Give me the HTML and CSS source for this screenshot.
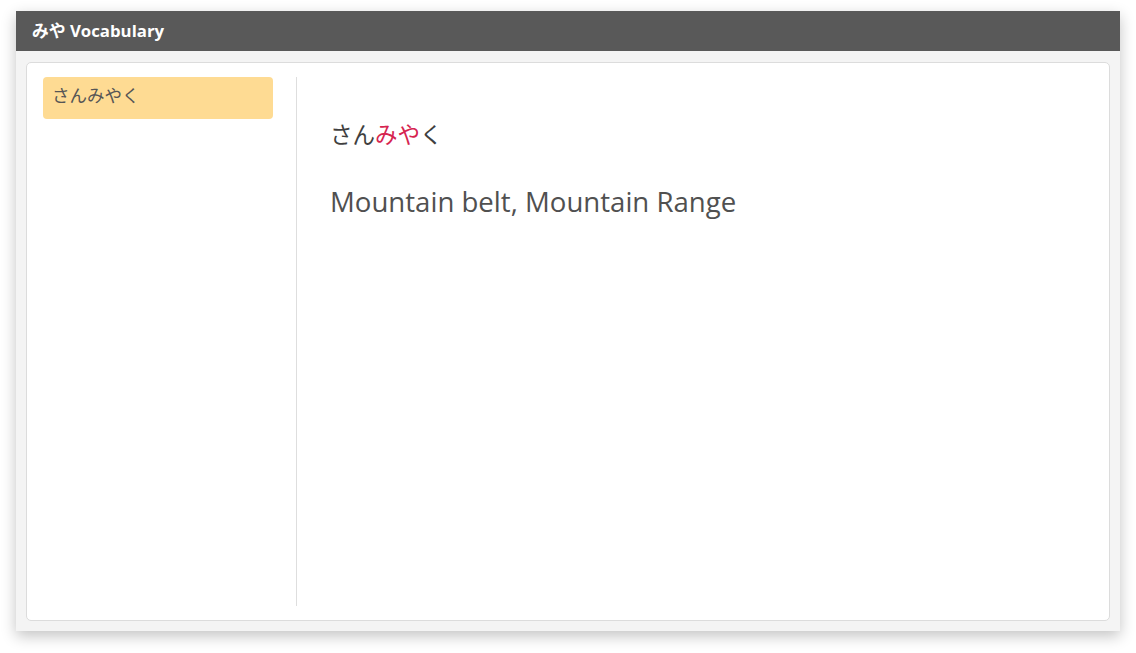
FILE: index.html
```html
<!DOCTYPE html>
<html lang="ja">
<head>
<meta charset="utf-8">
<title>みや Vocabulary</title>
<link rel="stylesheet" href="styles.css">
</head>
<body>
<div class="window">
  <div class="titlebar">みや Vocabulary</div>
  <div class="window-body">
    <div class="card">
      <aside class="sidebar">
        <div class="item active">さんみやく</div>
      </aside>
      <main class="detail">
        <div class="word">さん<span class="hl">みや</span>く</div>
        <div class="meaning">Mountain belt, Mountain Range</div>
      </main>
    </div>
  </div>
</div>
</body>
</html>
```

FILE: styles.css
```css
html, body {
  margin: 0;
  padding: 0;
  background: #ffffff;
}
body {
  font-family: "Open Sans", "Noto Sans CJK JP", sans-serif;
  color: #444;
  padding: 11px 16px 0 16px;
  height: 653px;
  box-sizing: border-box;
}
.window {
  width: 1104px;
  height: 620px;
  display: flex;
  flex-direction: column;
  background: #f4f4f4;
  box-shadow: 0 5px 14px rgba(0, 0, 0, 0.24);
}
.titlebar {
  height: 40px;
  flex: none;
  background: #595959;
  color: #fff;
  font-weight: 700;
  font-size: 16.8px;
  line-height: 40px;
  padding-left: 16px;
  font-family: "Open Sans", "Noto Sans CJK JP", sans-serif;
}
.window-body {
  flex: 1;
  padding: 11px 10px 10px 10px;
  display: flex;
}
.card {
  flex: 1;
  display: flex;
  background: #fff;
  border: 1px solid #dcdcdc;
  border-radius: 5px;
  padding: 14px 15px 14px 16px;
}
.sidebar {
  width: 253px;
  flex: none;
  border-right: 1px solid #dedede;
}
.item {
  width: 230px;
  height: 42px;
  box-sizing: border-box;
  background: #fedb93;
  border-radius: 4px;
  padding: 6px 9px;
  font-family: "Noto Sans CJK JP", sans-serif;
  font-size: 17.5px;
  line-height: 23px;
  color: #555;
}
.detail {
  flex: 1;
  padding: 40px 34px 0 33px;
}
.word {
  font-family: "Noto Sans CJK JP", sans-serif;
  font-size: 22.5px;
  line-height: 32px;
  color: #3f3f3f;
}
.hl {
  color: #d62450;
}
.meaning {
  margin-top: 33px;
  font-family: "Open Sans", sans-serif;
  font-size: 27.6px;
  line-height: 38px;
  color: #505050;
}
```
